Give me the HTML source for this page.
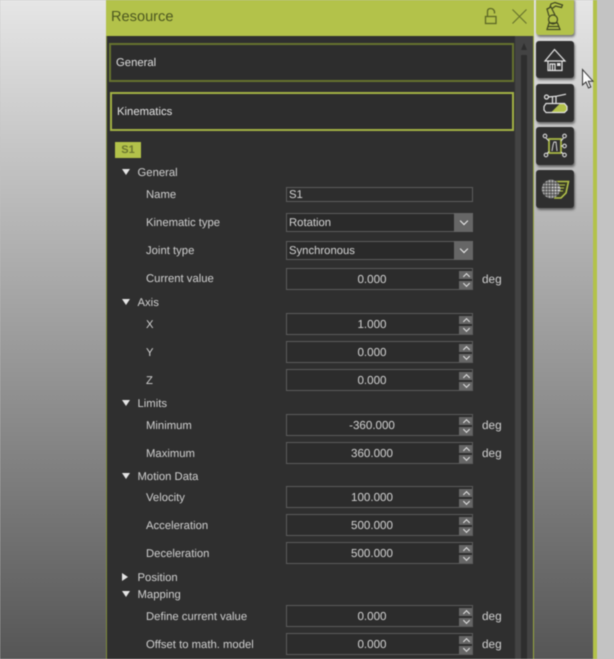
<!DOCTYPE html>
<html><head><meta charset="utf-8"><style>
html,body{margin:0;padding:0;width:614px;height:659px;overflow:hidden;background:#c3c3c3}
#r{position:absolute;left:0;top:0;width:614px;height:659px;overflow:hidden;font:11.3px/16px "Liberation Sans",sans-serif;color:#cfcfcf;filter:blur(.4px);text-rendering:geometricPrecision}
#r div{position:absolute;box-sizing:border-box}
.bg{left:0;top:0;width:593px;height:659px;background:linear-gradient(#e6e6e6,#565656)}
.l{left:146px;white-space:nowrap;margin-top:-7px}
.s{left:137.5px;white-space:nowrap;margin-top:-7px}
.tri{left:122px;width:0;height:0;margin-top:-3px;border-left:4px solid transparent;border-right:4px solid transparent;border-top:6.5px solid #e4e4e4}
.trr{left:122px;width:0;height:0;margin-top:-4px;border-top:4px solid transparent;border-bottom:4px solid transparent;border-left:6.5px solid #e4e4e4}
.n{left:286px;width:187px;height:22px;margin-top:-11px;border:1px solid #5c5c5c;background:#2c2c2c;text-align:center;padding-right:15px;line-height:22px;color:#d2d2d2;font-size:11.6px}
.up,.dn{left:172px;width:13px;height:8px;background:#666}
.up{top:2px}.dn{top:12px}
.up:after,.dn:after{content:"";position:absolute;left:4.500px;width:4px;height:4px;border-left:1.200px solid #e6e6e6;border-top:1.200px solid #e6e6e6;transform:rotate(45deg);top:3px}
.dn:after{transform:rotate(225deg);top:0}
.u{left:482px;margin-top:-8px;font-size:11.8px}
.c{left:286px;width:187px;height:19px;border:1px solid #5c5c5c;background:#2a2a2a;padding-left:2px;line-height:19px;color:#d4d4d4}
.b{left:167px;top:-1px;width:19px;height:19px;background:#666}
.b:after{content:"";position:absolute;left:7px;top:5px;width:5px;height:5px;border-left:1.500px solid #eee;border-bottom:1.500px solid #eee;transform:rotate(-45deg)}
.k{left:536px;width:38px;background:#2f2f2f;border-radius:3px;box-shadow:1px 2px 2px rgba(30,30,30,.55)}
</style></head><body><div id="r">
<div class="bg"></div>
<div style="left:593px;top:0;width:4px;height:659px;background:#b3c24a"></div>
<div style="left:597px;top:0;width:17px;height:659px;background:#c3c3c3"></div>

<div style="left:106px;top:0;width:428px;height:659px;background:#2f2f2f;border-left:1px solid #7f8c3a;border-right:1px solid #97a63f"></div>
<div style="left:106px;top:0;width:428px;height:36px;background:#b3c24a"></div>
<div style="left:111px;top:9px;font-size:14.6px;line-height:17px;color:#4d5820">Resource</div>

<div style="left:515px;top:36px;width:18px;height:623px;background:#434343"></div>
<div style="left:521px;top:55px;width:6px;height:604px;background:#2e2e2e"></div>
<div style="left:520.5px;top:43px;width:0;height:0;border-left:3.5px solid transparent;border-right:3.5px solid transparent;border-bottom:7px solid #2e2e2e"></div>

<div style="left:109px;top:43px;width:405px;height:39px;border:2px solid #66722f;background:#2d2d2d"></div>
<div style="left:116px;top:55px;color:#dedede">General</div>
<div style="left:110px;top:92px;width:404px;height:39px;border:2px solid #a3b244;background:#2d2d2d"></div>
<div style="left:117px;top:104px;color:#e2e2e2">Kinematics</div>
<div style="left:115px;top:142px;width:26px;height:16px;background:#b3c24a;color:#6c7730;font-weight:bold;font-size:11px;line-height:17px;text-align:center">S1</div>

<div class="tri" style="top:172px"></div><div class="s" style="top:172px">General</div>
<div class="l" style="top:194px">Name</div>
<div class="c" style="top:187px;height:15px;line-height:15px;background:#2d2d2d">S1</div>
<div class="l" style="top:222px">Kinematic type</div>
<div class="c" style="top:213px">Rotation<div class="b"></div></div>
<div class="l" style="top:250px">Joint type</div>
<div class="c" style="top:241px">Synchronous<div class="b"></div></div>
<div class="l" style="top:278px">Current value</div>
<div class="n" style="top:279px">0.000<div class="up"></div><div class="dn"></div></div><div class="u" style="top:279px">deg</div>

<div class="tri" style="top:302px"></div><div class="s" style="top:302px">Axis</div>
<div class="l" style="top:324px">X</div><div class="n" style="top:324px">1.000<div class="up"></div><div class="dn"></div></div>
<div class="l" style="top:352px">Y</div><div class="n" style="top:352px">0.000<div class="up"></div><div class="dn"></div></div>
<div class="l" style="top:380px">Z</div><div class="n" style="top:380px">0.000<div class="up"></div><div class="dn"></div></div>

<div class="tri" style="top:403px"></div><div class="s" style="top:403px">Limits</div>
<div class="l" style="top:425px">Minimum</div><div class="n" style="top:425px">-360.000<div class="up"></div><div class="dn"></div></div><div class="u" style="top:425px">deg</div>
<div class="l" style="top:453px">Maximum</div><div class="n" style="top:453px">360.000<div class="up"></div><div class="dn"></div></div><div class="u" style="top:453px">deg</div>

<div class="tri" style="top:476px"></div><div class="s" style="top:476px">Motion Data</div>
<div class="l" style="top:497px">Velocity</div><div class="n" style="top:497px">100.000<div class="up"></div><div class="dn"></div></div>
<div class="l" style="top:525px">Acceleration</div><div class="n" style="top:525px">500.000<div class="up"></div><div class="dn"></div></div>
<div class="l" style="top:553px">Deceleration</div><div class="n" style="top:553px">500.000<div class="up"></div><div class="dn"></div></div>

<div class="trr" style="top:577px"></div><div class="s" style="top:577px">Position</div>
<div class="tri" style="top:594px"></div><div class="s" style="top:594px">Mapping</div>
<div class="l" style="top:616px">Define current value</div><div class="n" style="top:616px">0.000<div class="up"></div><div class="dn"></div></div><div class="u" style="top:616px">deg</div>
<div class="l" style="top:644px">Offset to math. model</div><div class="n" style="top:644px">0.000<div class="up"></div><div class="dn"></div></div><div class="u" style="top:644px">deg</div>

<div class="k" style="top:-3px;height:38px;background:#b3c24a"></div>
<div class="k" style="top:41px;height:37px"></div>
<div class="k" style="top:84px;height:38px"></div>
<div class="k" style="top:127px;height:38px"></div>
<div class="k" style="top:170px;height:38px"></div>

<svg width="614" height="659" viewBox="0 0 614 659" style="position:absolute;left:0;top:0" fill="none">
<!-- lock -->
<g stroke="#5d6825" stroke-width="1.300"><rect x="485.500" y="16.500" width="10.500" height="7"/><path d="M487.500 16V11.500q0-3 3-3 3 0 4 3v2"/></g>
<!-- close -->
<path d="M512.500 9.500L526.500 23.500M526.500 9.500L512.500 23.500" stroke="#66722c" stroke-width="1.100"/>
<!-- robot -->
<g stroke="#3f4621" stroke-width="1.200"><path d="M547 29.500l2-6.500h8.500l2.500 6.500zM548 26.500h11"/><circle cx="553" cy="19.500" r="4.500"/><path d="M549 16l-2-7 4-2 4 8M548 9l2-2 1-3 4-1.500 7.500 2.500-1 2.500-6-1.500-4 3"/></g>
<!-- home -->
<g stroke="#e4e4e4" stroke-width="1.200"><path d="M545 61l9.500-11.500L565 61z"/><path d="M548 61v9.500h14v-9.500M550 70v-6h5v6M552.500 64v6"/></g><rect x="557" y="63" width="3.500" height="3" fill="#e4e4e4"/>
<!-- tool -->
<g stroke="#e4e4e4" stroke-width="1.200"><circle cx="546.500" cy="97" r="2"/><path d="M548.500 97l8-.8 9.500-2M556 96.500v6.500M552.500 97v6"/></g>
<path d="M551 112.500l9-9h4.500l2.500 3v3.500l-2.500 2.500z" fill="#b3c24a"/>
<path d="M546 103.500h18.500l2.500 3v3.500l-2.500 2.500h-18.500l-2-2.500v-3.500z" stroke="#e4e4e4" stroke-width="1.200"/>
<!-- circuit -->
<rect x="549" y="139" width="12" height="14" stroke="#a9b845" stroke-width="1.800"/>
<path d="M552 151l1-6 1-3h2l1 9" stroke="#d4d4d4" stroke-width="1"/>
<g stroke="#dcdcdc" stroke-width="1.100"><circle cx="545" cy="136" r="1.800"/><circle cx="564.500" cy="136" r="1.800"/><circle cx="564.500" cy="146" r="1.800"/><circle cx="546" cy="155" r="1.800"/><circle cx="564.500" cy="155" r="1.800"/><path d="M546 138l3 3M563.500 138l-2.500 3M562.500 146h-1.500M547 153.500l2-2M563 153.500l-2-1.500"/></g>
<!-- globe -->
<path d="M556 181.500h12.500l-2.500 11.500-5 5h-7" stroke="#b3c24a" stroke-width="1.600" fill="#3a3d26"/>
<path d="M559 185h6M559 188h5M559 191h4" stroke="#b3c24a" stroke-width="1"/>
<circle cx="551" cy="189" r="9.200" fill="#a8a8a8"/>
<circle cx="556" cy="189" r="4.500" fill="#e0e0e0" opacity=".6"/>
<g stroke="#3a3a3a" stroke-width=".7"><path d="M542 183h17M542 186h18M542 189h18M542 192h18M543 195h16M545 180v18M548 180v18M551 180v18M554 180v18M557 181v16"/></g>
<!-- cursor -->
<path d="M582.500 69.500v15.500l3.500-3 2.500 6 2.300-1-2.500-5.800h4.700z" fill="#fbfbfb" stroke="#333" stroke-width="1"/>
</svg>
</div></body></html>
